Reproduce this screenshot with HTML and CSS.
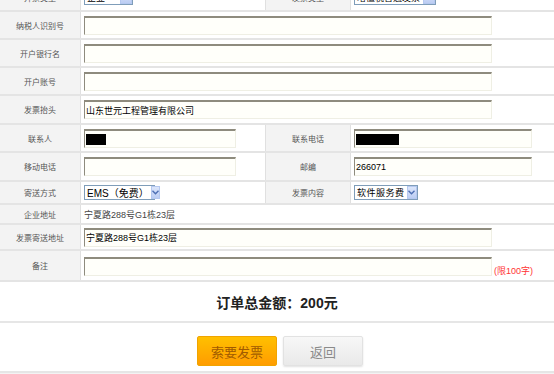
FILE: index.html
```html
<!DOCTYPE html>
<html lang="zh-CN">
<head>
  <meta charset="UTF-8" />
  <meta name="viewport" content="width=device-width, initial-scale=1">
  <title>索要发票</title>
  <link rel="stylesheet" href="styles.css">
</head>
<body>

  <div class="invoice-form">

    <div class="row row-top">
      <div class="label">开票类型</div>
      <div class="value value-half">
        <span class="select select-type">企业<span class="arrow"><svg width="7" height="5" viewBox="0 0 7 5"><path d="M0.5 0.8 L3.5 3.8 L6.5 0.8" fill="none" stroke="#4d6fb3" stroke-width="1.4"/></svg></span></span>
      </div>
      <div class="label label-right">发票类型</div>
      <div class="value">
        <span class="select select-kind">增值税普通发票<span class="arrow"><svg width="7" height="5" viewBox="0 0 7 5"><path d="M0.5 0.8 L3.5 3.8 L6.5 0.8" fill="none" stroke="#4d6fb3" stroke-width="1.4"/></svg></span></span>
      </div>
    </div>

    <div class="row h28">
      <div class="label">纳税人识别号</div>
      <div class="value"><span class="input input-wide"></span></div>
    </div>

    <div class="row h28">
      <div class="label">开户银行名</div>
      <div class="value"><span class="input input-wide"></span></div>
    </div>

    <div class="row h28">
      <div class="label">开户账号</div>
      <div class="value"><span class="input input-wide"></span></div>
    </div>

    <div class="row h29">
      <div class="label">发票抬头</div>
      <div class="value"><span class="input input-wide">山东世元工程管理有限公司</span></div>
    </div>

    <div class="row h28">
      <div class="label">联系人</div>
      <div class="value value-half"><span class="input input-short"><span class="redact redact-name"></span></span></div>
      <div class="label label-right">联系电话</div>
      <div class="value"><span class="input input-right"><span class="redact redact-phone"></span></span></div>
    </div>

    <div class="row h29">
      <div class="label">移动电话</div>
      <div class="value value-half"><span class="input input-short"></span></div>
      <div class="label label-right">邮编</div>
      <div class="value"><span class="input input-right">266071</span></div>
    </div>

    <div class="row h23">
      <div class="label">寄送方式</div>
      <div class="value value-half">
        <span class="select select-ship">EMS（免费）<span class="arrow"><svg width="7" height="5" viewBox="0 0 7 5"><path d="M0.5 0.8 L3.5 3.8 L6.5 0.8" fill="none" stroke="#4d6fb3" stroke-width="1.4"/></svg></span></span>
      </div>
      <div class="label label-right">发票内容</div>
      <div class="value">
        <span class="select select-content">软件服务费<span class="arrow"><svg width="7" height="5" viewBox="0 0 7 5"><path d="M0.5 0.8 L3.5 3.8 L6.5 0.8" fill="none" stroke="#4d6fb3" stroke-width="1.4"/></svg></span></span>
      </div>
    </div>

    <div class="row h20">
      <div class="label">企业地址</div>
      <div class="value plain-text">宁夏路288号G1栋23层</div>
    </div>

    <div class="row h26">
      <div class="label">发票寄送地址</div>
      <div class="value"><span class="input input-wide">宁夏路288号G1栋23层</span></div>
    </div>

    <div class="row h31">
      <div class="label">备注</div>
      <div class="value value-note">
        <span class="input input-wide"></span>
        <span class="limit">(限100字)</span>
      </div>
    </div>

    <div class="total">订单总金额：200元</div>

    <div class="button-group">
      <button class="btn btn-primary">索要发票</button>
      <button class="btn btn-back" onclick="history.back()">返回</button>
    </div>

  </div>

</body>
</html>
```

FILE: styles.css
```css
* {
  box-sizing: border-box;
  margin: 0;
  padding: 0;
}

body {
  font-family: "Liberation Sans", "Noto Sans CJK SC", sans-serif;
  background: #f3f3f3;
  overflow: hidden;
}

.invoice-form {
  background: white;
  border-bottom: 2px solid #e6e6e6;
}

.row {
  display: flex;
  border-bottom: 2px solid #e4e4e4;
}

.row-top {
  height: 28px;
  margin-top: -16px;
}

.h20 { height: 20px; }
.h23 { height: 23px; }
.h26 { height: 26px; }
.h28 { height: 28px; }
.h29 { height: 29px; }
.h31 { height: 31px; }

.label {
  width: 81px;
  flex-shrink: 0;
  background: #f3f3f3;
  border-right: 1px solid #e0e0e0;
  display: flex;
  align-items: center;
  justify-content: center;
  font-size: 8px;
  color: #555;
}

.label-right {
  width: 86px;
  border-left: 1px solid #e0e0e0;
}

.value {
  flex: 1;
  display: flex;
  align-items: center;
  padding-left: 3px;
  font-size: 9px;
  color: #000;
}

.value-half {
  flex: none;
  width: 184px;
}

.plain-text {
  color: #444;
  font-size: 9px;
}

.value-note {
  align-items: flex-end;
  padding-bottom: 4px;
}

.input {
  display: flex;
  align-items: center;
  height: 19px;
  padding-left: 1px;
  background: #fffffa;
  border-top: 2px solid #8e8b7e;
  border-left: 1px solid #8e8b7e;
  border-right: 1px solid #efefe4;
  border-bottom: 1px solid #efefe4;
  font-size: 9px;
  color: #000;
}

.input-wide {
  width: 408px;
}

.input-short {
  width: 152px;
}

.input-right {
  width: 178px;
}

.redact {
  display: block;
  height: 11px;
  background: #000;
  margin-top: 1px;
}

.redact-name {
  width: 20px;
}

.redact-phone {
  width: 43px;
}

.limit {
  margin-left: 2px;
  font-size: 9px;
  color: #f33;
  line-height: 1;
}

.select {
  display: inline-flex;
  align-items: center;
  justify-content: space-between;
  height: 15px;
  padding-left: 2px;
  border: 1px solid #7f9db9;
  background: white;
  font-size: 9px;
  color: #000;
  white-space: nowrap;
}

.select .arrow {
  display: flex;
  align-items: center;
  justify-content: center;
  width: 12px;
  height: 13px;
  margin-left: 2px;
  background: linear-gradient(#dce6fb, #bccdf3);
  border: 1px solid #b5c8f0;
}

.select-type {
  width: 49px;
}

.select-kind {
  width: 82px;
}

.select-ship {
  width: 71px;
  font-size: 10px;
}

.select-content {
  width: 64px;
  letter-spacing: 0.5px;
}

.total {
  height: 41px;
  display: flex;
  align-items: center;
  justify-content: center;
  font-size: 14px;
  font-weight: bold;
  color: #222;
  border-bottom: 2px solid #e6e6e6;
}

.button-group {
  height: 48px;
  display: flex;
  justify-content: center;
  align-items: center;
  gap: 6px;
  padding-top: 8px;
  padding-left: 6px;
}

.btn {
  width: 80px;
  height: 30px;
  border-radius: 2px;
  font-family: "Liberation Sans", "Noto Sans CJK SC", sans-serif;
  font-size: 13px;
  cursor: pointer;
}

.btn-primary {
  background: linear-gradient(#ffc000, #ff9c00);
  border: 1px solid #f0a400;
  color: #a05a00;
}

.btn-back {
  background: linear-gradient(#f7f7f7, #e9e9e9);
  border: 1px solid #e2e2e2;
  box-shadow: 0 1px 2px rgba(0, 0, 0, 0.12);
  color: #8a8a8a;
}
```
